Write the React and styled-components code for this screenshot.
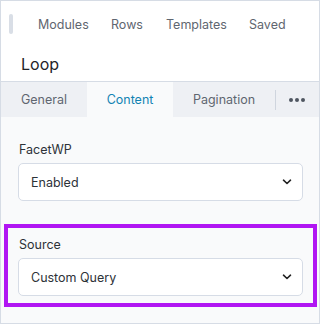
import React from "react";
import styled, { createGlobalStyle } from "styled-components";

const GlobalStyle = createGlobalStyle`
  html, body {
    margin: 0;
    padding: 0;
    background: #ffffff;
  }
  body {
    font-family: Inter, "Noto Sans", sans-serif;
    -webkit-font-smoothing: antialiased;
  }
`;

const Panel = styled.div`
  width: 320px;
  height: 324px;
  box-sizing: border-box;
  border: 1px solid #d6dce5;
  display: flex;
  flex-direction: column;
  background: #f9fafb;
  overflow: hidden;
`;

const Header = styled.div`
  background: #ffffff;
  border-bottom: 1px solid #d6dce5;
  height: 81px;
  box-sizing: border-box;
  display: flex;
  flex-direction: column;
`;

const TopBar = styled.div`
  display: flex;
  align-items: center;
  height: 46px;
  padding-left: 8px;
`;

const Handle = styled.div`
  width: 4px;
  height: 20px;
  border-radius: 2px;
  background: #d9dee6;
  margin-right: 25px;
`;

const NavLink = styled.span`
  width: ${(p) => p.$w}px;
  flex: none;
  font-size: 12.5px;
  color: #5f6670;
`;

const Title = styled.div`
  font-size: 16px;
  color: #1f2329;
  padding-left: 20px;
  margin-top: 7px;
  line-height: 20px;
`;

const Tabs = styled.div`
  display: flex;
  height: 35px;
  background: #eef0f4;
  align-items: stretch;
`;

const Tab = styled.div`
  width: ${(p) => p.$w}px;
  display: flex;
  align-items: center;
  justify-content: center;
  font-size: 12.5px;
  color: ${(p) => (p.$active ? "#1283b3" : "#5f6670")};
  background: ${(p) => (p.$active ? "#f9fafb" : "transparent")};
`;

const More = styled.div`
  flex: 1;
  display: flex;
  align-items: center;
  justify-content: center;
  position: relative;
  &::before {
    content: "";
    position: absolute;
    left: 0;
    top: 8px;
    bottom: 7px;
    width: 1px;
    background: #cfd5de;
  }
`;

const Dots = styled.div`
  display: flex;
  gap: 2px;
  span {
    width: 4px;
    height: 4px;
    border-radius: 50%;
    background: #4f5660;
  }
`;

const Body = styled.div`
  display: flex;
  flex-direction: column;
  padding-top: 24px;
`;

const Field = styled.div`
  display: flex;
  flex-direction: column;
  gap: 5px;
  padding: ${(p) => (p.$boxed ? "8px 10px 7px 10px" : "0 16px 0 17px")};
  margin: ${(p) => (p.$boxed ? "23px 2px 0 3px" : "0")};
  border: ${(p) => (p.$boxed ? "4px solid #b116f3" : "none")};
`;

const Label = styled.div`
  font-size: 12.5px;
  line-height: 17px;
  color: #2d3238;
  padding-left: 1px;
`;

const Select = styled.div`
  height: 38px;
  box-sizing: border-box;
  border: 1px solid #d6dce6;
  border-radius: 5px;
  background: #ffffff;
  display: flex;
  align-items: center;
  justify-content: space-between;
  padding: 0 10px 0 12px;
  font-size: 12.5px;
  color: #2d3238;
`;

const Chevron = () => (
  <svg width="10" height="6" viewBox="0 0 10 6" fill="none">
    <path d="M1.5 1.2 L5 4.5 L8.5 1.2" stroke="#222" strokeWidth="1.6" strokeLinecap="round" strokeLinejoin="round" />
  </svg>
);

export default function App() {
  return (
    <>
      <GlobalStyle />
      <Panel>
        <Header>
          <TopBar>
            <Handle />
            <NavLink $w={73}>Modules</NavLink>
            <NavLink $w={55}>Rows</NavLink>
            <NavLink $w={83}>Templates</NavLink>
            <NavLink $w={50}>Saved</NavLink>
          </TopBar>
          <Title>Loop</Title>
        </Header>
        <Tabs>
          <Tab $w={86}>General</Tab>
          <Tab $w={86} $active>Content</Tab>
          <Tab $w={102}>Pagination</Tab>
          <More>
            <Dots>
              <span />
              <span />
              <span />
            </Dots>
          </More>
        </Tabs>
        <Body>
          <Field>
            <Label>FacetWP</Label>
            <Select>
              Enabled
              <Chevron />
            </Select>
          </Field>
          <Field $boxed>
            <Label>Source</Label>
            <Select>
              Custom Query
              <Chevron />
            </Select>
          </Field>
        </Body>
      </Panel>
    </>
  );
}
